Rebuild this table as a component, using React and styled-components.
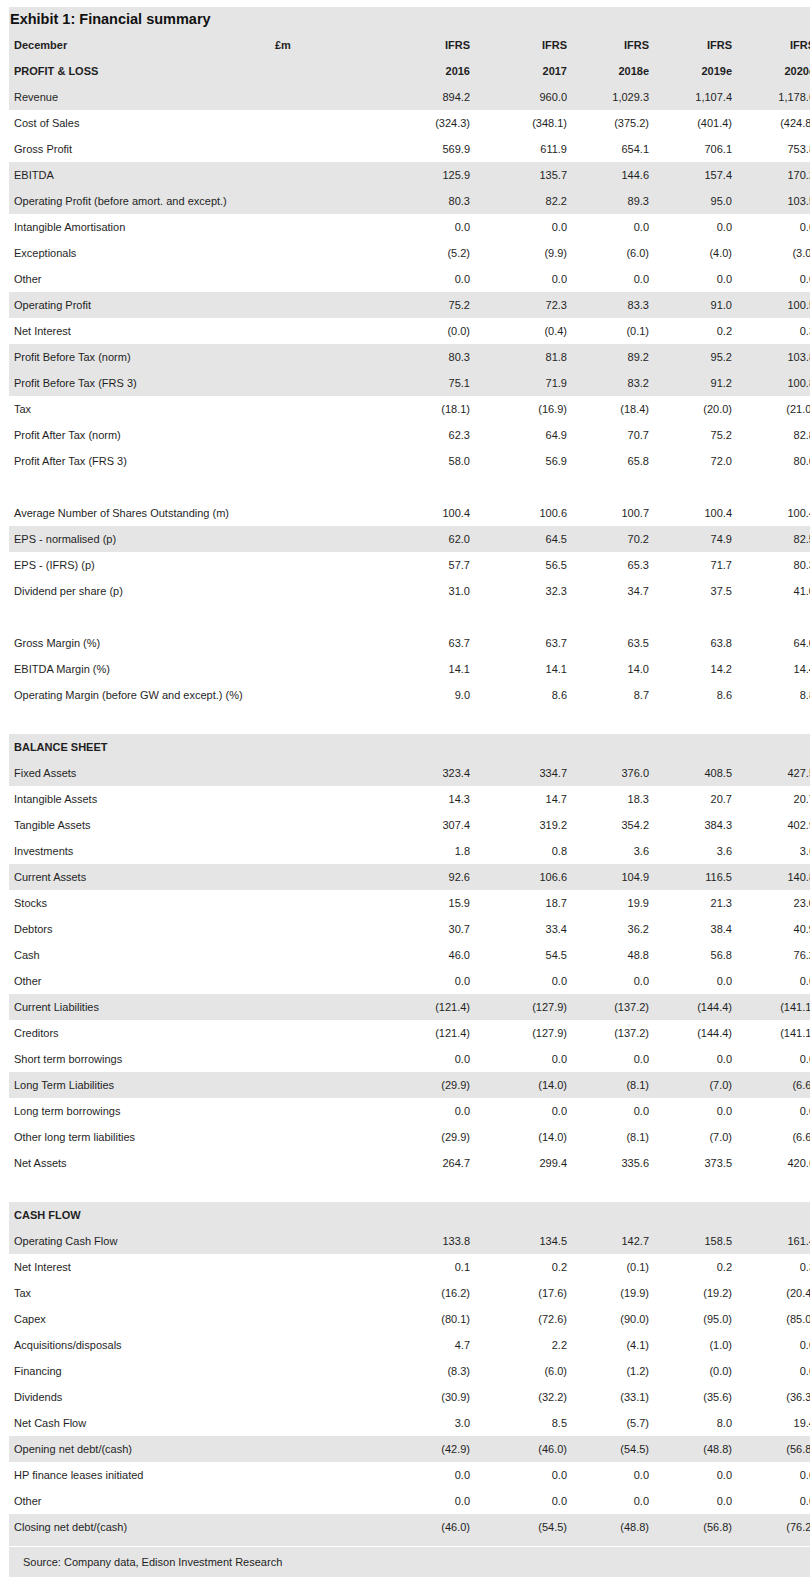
import styled, { createGlobalStyle } from "styled-components";

const GlobalStyle = createGlobalStyle`
  html, body {
    margin: 0;
    padding: 0;
    background: #ffffff;
    overflow-x: hidden;
  }
  body {
    font-family: "Liberation Sans", Arial, sans-serif;
    color: #1f1f1f;
  }
`;

const Page = styled.div`
  padding: 7px 0 8px 9px;
`;

const Sheet = styled.div`
  width: 801px;
  overflow: hidden;
`;

const Table = styled.div`
  width: 806px;
`;

const Title = styled.div`
  height: 25px;
  line-height: 25px;
  padding-left: 1px;
  background: #e5e5e5;
  font-size: 14.5px;
  font-weight: 700;
  color: #111;
`;

const Row = styled.div`
  display: grid;
  grid-template-columns: 266px 100px 95px 97px 82px 83px 83px;
  height: ${({ $extra }) => 26 + ($extra || 0)}px;
  line-height: 26px;
  font-size: 11px;
  font-weight: ${({ $bold }) => ($bold ? 700 : 400)};
  background: ${({ $shaded }) => ($shaded ? "#e5e5e5" : "#ffffff")};
  white-space: nowrap;
`;

const Label = styled.div`
  padding-left: 5px;
`;

const Unit = styled.div``;

const Cell = styled.div`
  text-align: right;
`;

const Source = styled.div`
  height: 30px;
  line-height: 30px;
  border-top: 1px solid #ffffff;
  background: #e5e5e5;
  padding-left: 14px;
  font-size: 11px;
`;

const years = [
  ["IFRS", "IFRS", "IFRS", "IFRS", "IFRS"],
  ["2016", "2017", "2018e", "2019e", "2020e"],
];

// [label, values, shaded, bold]
const rows = [
  ["Revenue", ["894.2", "960.0", "1,029.3", "1,107.4", "1,178.6"], true],
  ["Cost of Sales", ["(324.3)", "(348.1)", "(375.2)", "(401.4)", "(424.8)"]],
  ["Gross Profit", ["569.9", "611.9", "654.1", "706.1", "753.8"]],
  ["EBITDA", ["125.9", "135.7", "144.6", "157.4", "170.2"], true],
  ["Operating Profit (before amort. and except.)", ["80.3", "82.2", "89.3", "95.0", "103.5"], true],
  ["Intangible Amortisation", ["0.0", "0.0", "0.0", "0.0", "0.0"]],
  ["Exceptionals", ["(5.2)", "(9.9)", "(6.0)", "(4.0)", "(3.0)"]],
  ["Other", ["0.0", "0.0", "0.0", "0.0", "0.0"]],
  ["Operating Profit", ["75.2", "72.3", "83.3", "91.0", "100.5"], true],
  ["Net Interest", ["(0.0)", "(0.4)", "(0.1)", "0.2", "0.3"]],
  ["Profit Before Tax (norm)", ["80.3", "81.8", "89.2", "95.2", "103.8"], true],
  ["Profit Before Tax (FRS 3)", ["75.1", "71.9", "83.2", "91.2", "100.8"], true],
  ["Tax", ["(18.1)", "(16.9)", "(18.4)", "(20.0)", "(21.0)"]],
  ["Profit After Tax (norm)", ["62.3", "64.9", "70.7", "75.2", "82.8"]],
  ["Profit After Tax (FRS 3)", ["58.0", "56.9", "65.8", "72.0", "80.6"]],
  ["", null],
  ["Average Number of Shares Outstanding (m)", ["100.4", "100.6", "100.7", "100.4", "100.4"]],
  ["EPS - normalised (p)", ["62.0", "64.5", "70.2", "74.9", "82.5"], true],
  ["EPS - (IFRS) (p)", ["57.7", "56.5", "65.3", "71.7", "80.3"]],
  ["Dividend per share (p)", ["31.0", "32.3", "34.7", "37.5", "41.0"]],
  ["", null],
  ["Gross Margin (%)", ["63.7", "63.7", "63.5", "63.8", "64.0"]],
  ["EBITDA Margin (%)", ["14.1", "14.1", "14.0", "14.2", "14.4"]],
  ["Operating Margin (before GW and except.) (%)", ["9.0", "8.6", "8.7", "8.6", "8.8"]],
  ["", null],
  ["BALANCE SHEET", null, true, true],
  ["Fixed Assets", ["323.4", "334.7", "376.0", "408.5", "427.5"], true],
  ["Intangible Assets", ["14.3", "14.7", "18.3", "20.7", "20.7"]],
  ["Tangible Assets", ["307.4", "319.2", "354.2", "384.3", "402.9"]],
  ["Investments", ["1.8", "0.8", "3.6", "3.6", "3.6"]],
  ["Current Assets", ["92.6", "106.6", "104.9", "116.5", "140.8"], true],
  ["Stocks", ["15.9", "18.7", "19.9", "21.3", "23.0"]],
  ["Debtors", ["30.7", "33.4", "36.2", "38.4", "40.9"]],
  ["Cash", ["46.0", "54.5", "48.8", "56.8", "76.2"]],
  ["Other", ["0.0", "0.0", "0.0", "0.0", "0.0"]],
  ["Current Liabilities", ["(121.4)", "(127.9)", "(137.2)", "(144.4)", "(141.1)"], true],
  ["Creditors", ["(121.4)", "(127.9)", "(137.2)", "(144.4)", "(141.1)"]],
  ["Short term borrowings", ["0.0", "0.0", "0.0", "0.0", "0.0"]],
  ["Long Term Liabilities", ["(29.9)", "(14.0)", "(8.1)", "(7.0)", "(6.6)"], true],
  ["Long term borrowings", ["0.0", "0.0", "0.0", "0.0", "0.0"]],
  ["Other long term liabilities", ["(29.9)", "(14.0)", "(8.1)", "(7.0)", "(6.6)"]],
  ["Net Assets", ["264.7", "299.4", "335.6", "373.5", "420.6"]],
  ["", null],
  ["CASH FLOW", null, true, true],
  ["Operating Cash Flow", ["133.8", "134.5", "142.7", "158.5", "161.4"], true],
  ["Net Interest", ["0.1", "0.2", "(0.1)", "0.2", "0.3"]],
  ["Tax", ["(16.2)", "(17.6)", "(19.9)", "(19.2)", "(20.4)"]],
  ["Capex", ["(80.1)", "(72.6)", "(90.0)", "(95.0)", "(85.0)"]],
  ["Acquisitions/disposals", ["4.7", "2.2", "(4.1)", "(1.0)", "0.0"]],
  ["Financing", ["(8.3)", "(6.0)", "(1.2)", "(0.0)", "0.0"]],
  ["Dividends", ["(30.9)", "(32.2)", "(33.1)", "(35.6)", "(36.3)"]],
  ["Net Cash Flow", ["3.0", "8.5", "(5.7)", "8.0", "19.4"]],
  ["Opening net debt/(cash)", ["(42.9)", "(46.0)", "(54.5)", "(48.8)", "(56.8)"], true],
  ["HP finance leases initiated", ["0.0", "0.0", "0.0", "0.0", "0.0"]],
  ["Other", ["0.0", "0.0", "0.0", "0.0", "0.0"]],
];

const closing = ["Closing net debt/(cash)", ["(46.0)", "(54.5)", "(48.8)", "(56.8)", "(76.2)"]];

function DataRow({ label, values, shaded, bold, unit, extra }) {
  const cells = values || ["", "", "", "", ""];
  return (
    <Row $shaded={shaded} $bold={bold} $extra={extra}>
      <Label>{label}</Label>
      <Unit>{unit}</Unit>
      {cells.map((v, i) => (
        <Cell key={i}>{v}</Cell>
      ))}
    </Row>
  );
}

export default function App() {
  return (
    <>
      <GlobalStyle />
      <Page>
        <Sheet>
          <Table>
            <Title>Exhibit 1: Financial summary</Title>
            <DataRow label="December" unit="£m" values={years[0]} shaded bold />
            <DataRow label="PROFIT & LOSS" values={years[1]} shaded bold />
            {rows.map(([label, values, shaded, bold], i) => (
              <DataRow key={i} label={label} values={values} shaded={shaded} bold={bold} />
            ))}
            <DataRow label={closing[0]} values={closing[1]} shaded extra={6} />
            <Source>Source: Company data, Edison Investment Research</Source>
          </Table>
        </Sheet>
      </Page>
    </>
  );
}
